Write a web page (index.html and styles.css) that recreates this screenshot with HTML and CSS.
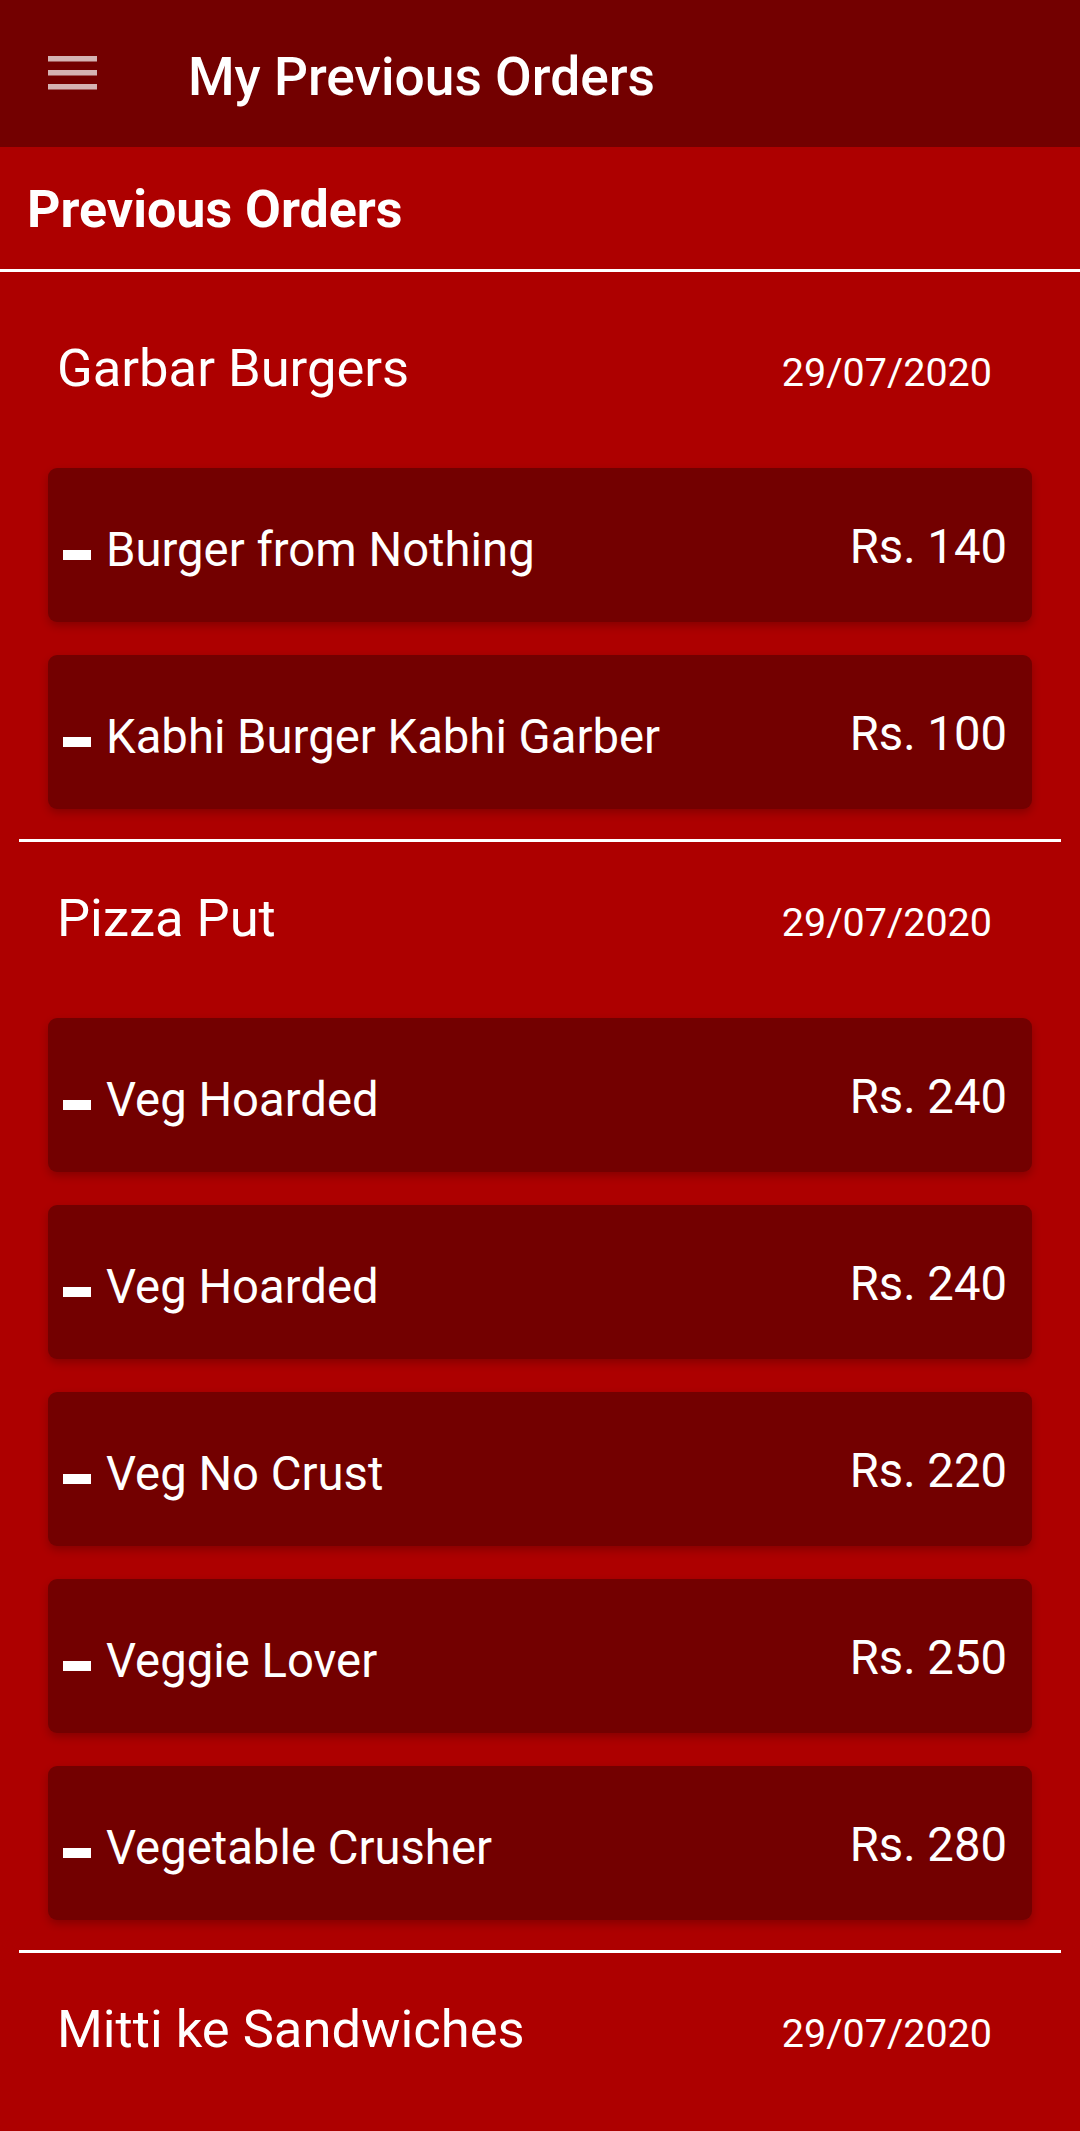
FILE: index.html
```html
<!DOCTYPE html>
<html lang="en">
<head>
<meta charset="utf-8">
<title>My Previous Orders</title>
<link rel="stylesheet" href="styles.css">
</head>
<body>
<header class="appbar">
  <svg class="menu" viewBox="0 0 66 66" aria-hidden="true">
    <rect x="7" y="16" width="49" height="5.5" />
    <rect x="7" y="30" width="49" height="5.5" />
    <rect x="7" y="44" width="49" height="5.5" />
  </svg>
  <h1 class="appbar-title">My Previous Orders</h1>
</header>
<div class="page-head">Previous Orders</div>
<main class="orders">
  <section class="order">
    <div class="order-head"><span class="name">Garbar Burgers</span><span class="date">29/07/2020</span></div>
    <div class="items">
      <div class="item"><span class="item-name"><span class="dash"></span>Burger from Nothing</span><span class="price">Rs. 140</span></div>
      <div class="item"><span class="item-name"><span class="dash"></span>Kabhi Burger Kabhi Garber</span><span class="price">Rs. 100</span></div>
    </div>
  </section>
  <div class="sep"></div>
  <section class="order">
    <div class="order-head"><span class="name">Pizza Put</span><span class="date">29/07/2020</span></div>
    <div class="items">
      <div class="item"><span class="item-name"><span class="dash"></span>Veg Hoarded</span><span class="price">Rs. 240</span></div>
      <div class="item"><span class="item-name"><span class="dash"></span>Veg Hoarded</span><span class="price">Rs. 240</span></div>
      <div class="item"><span class="item-name"><span class="dash"></span>Veg No Crust</span><span class="price">Rs. 220</span></div>
      <div class="item"><span class="item-name"><span class="dash"></span>Veggie Lover</span><span class="price">Rs. 250</span></div>
      <div class="item"><span class="item-name"><span class="dash"></span>Vegetable Crusher</span><span class="price">Rs. 280</span></div>
    </div>
  </section>
  <div class="sep"></div>
  <section class="order">
    <div class="order-head"><span class="name">Mitti ke Sandwiches</span><span class="date">29/07/2020</span></div>
  </section>
</main>
</body>
</html>
```
FILE: styles.css
```css
html, body {
  margin: 0;
  padding: 0;
}
body {
  background: #ad0000;
  color: #fff;
  font-family: Roboto, "Noto Sans", "Liberation Sans", sans-serif;
}
.appbar {
  height: 147px;
  background: #730000;
  display: flex;
  align-items: flex-start;
}
.menu {
  width: 66px;
  height: 66px;
  margin: 40px 0 0 41px;
  fill: rgba(255, 255, 255, 0.7);
  flex: none;
}
.appbar-title {
  margin: 45px 0 0 81px;
  font-size: 53.3px;
  line-height: 64px;
  font-weight: 500;
}
.page-head {
  padding: 32px 0 28px 27px;
  font-size: 52px;
  line-height: 62px;
  font-weight: 700;
  border-bottom: 3px solid #fff;
}
.orders {
  padding-top: 20px;
}
.order-head {
  display: flex;
  justify-content: space-between;
  align-items: baseline;
  padding: 43px 88px 0 57px;
}
.name {
  font-size: 52.5px;
  line-height: 66px;
}
.date {
  font-size: 39.5px;
}
.items {
  display: flex;
  flex-direction: column;
  gap: 33px;
  margin: 67px 48px 30px;
}
.item {
  height: 154px;
  box-sizing: border-box;
  background: #730000;
  border-radius: 9px;
  box-shadow: 0 4px 8px rgba(0, 0, 0, 0.22);
  display: flex;
  justify-content: space-between;
  align-items: flex-start;
  padding: 0 25px 0 15px;
  font-size: 47.25px;
  line-height: 56px;
}
.item-name {
  padding-top: 54px;
}
.price {
  padding-top: 51px;
}
.dash {
  display: inline-block;
  width: 28px;
  height: 10px;
  background: #fff;
  margin: 0 15px 6px 0;
}
.sep {
  height: 3px;
  background: #fff;
  margin: 0 19px;
}
```
